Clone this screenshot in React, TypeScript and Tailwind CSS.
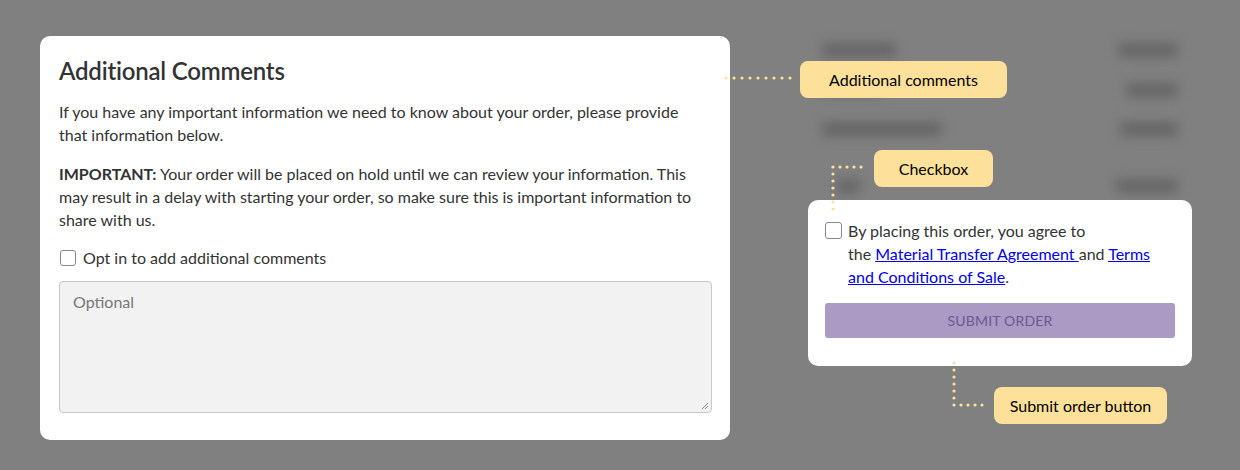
import React from "react";

const body = { fontFamily: "Lato, 'Noto Sans', sans-serif" };

function Dots({ points }: { points: [number, number][] }) {
  return (
    <>
      {points.map(([x, y], i) => (
        <circle key={i} cx={x} cy={y} r={1.6} fill="#fde19a" />
      ))}
    </>
  );
}

function range(a: number, b: number, step: number) {
  const out: number[] = [];
  for (let v = a; v <= b + 0.01; v += step) out.push(v);
  return out;
}

export default function App() {
  const dots: [number, number][] = [
    ...range(726, 790, 8).map((x) => [x, 78] as [number, number]),
    ...range(833, 861, 7).map((x) => [x, 167] as [number, number]),
    ...range(174, 209, 7).map((y) => [833, y] as [number, number]),
    ...range(363, 405, 7).map((y) => [954, y] as [number, number]),
    ...range(961, 982, 7).map((x) => [x, 405] as [number, number]),
  ];

  const bar = "h-[14px] rounded-[4px] bg-[#656565]";

  return (
    <div
      className="relative w-[1240px] h-[470px] bg-[#808080] overflow-hidden flex pt-[36px] pl-[40px]"
      style={body}
    >
      {/* Left card */}
      <div className="w-[690px] h-[404px] bg-white rounded-[10px] pt-[20px] pl-[19px] pr-[18px] text-[#333]">
        <h2 className="text-[24px] leading-[30px] font-semibold text-[#333] tracking-[-0.2px]">
          Additional Comments
        </h2>
        <p className="mt-[14px] w-[645px] text-[16px] leading-[23px]">
          If you have any important information we need to know about your order, please provide
          that information below.
        </p>
        <p className="mt-[16px] w-[645px] text-[16px] leading-[23px]">
          <span className="font-bold">IMPORTANT:</span> Your order will be placed on hold until we
          can review your information. This may result in a delay with starting your order, so make
          sure this is important information to share with us.
        </p>
        <label className="mt-[15px] flex items-center gap-[7px] text-[16px] leading-[23px]">
          <span className="ml-[1px] w-[16px] h-[16px] border-[1.5px] border-[#888] rounded-[3px] bg-white" />
          Opt in to add additional comments
        </label>
        <div className="relative mt-[12px] w-[653px] h-[132px] bg-[#f2f2f2] border border-[#c8c8c8] rounded-[4px] pl-[13px] pt-[8px] text-[16px] text-[#777]">
          Optional
          <svg className="absolute right-[2px] bottom-[2px]" width="8" height="8" viewBox="0 0 8 8">
            <path d="M7 1L1 7M7 4L4 7" stroke="#888" strokeWidth="1" />
          </svg>
        </div>
      </div>

      {/* Right column */}
      <div className="ml-[78px] w-[384px] flex flex-col">
        <div className="h-[164px] flex flex-col px-[14px] blur-[6px]">
          <div className="flex justify-between h-[28px] items-center">
            <div className={`w-[74px] ${bar}`} />
            <div className={`w-[60px] ${bar}`} />
          </div>
          <div className="flex justify-between h-[28px] items-center mt-[12px]">
            <div className="w-[60px] h-[14px] rounded-[4px] bg-[#707070]" />
            <div className={`w-[52px] ${bar}`} />
          </div>
          <div className="flex justify-between h-[28px] items-center mt-[12px]">
            <div className={`w-[120px] ${bar}`} />
            <div className={`w-[58px] ${bar}`} />
          </div>
          <div className="flex justify-between h-[28px] items-center mt-[29px]">
            <div className={`ml-[14px] w-[24px] ${bar}`} />
            <div className={`w-[62px] ${bar}`} />
          </div>
        </div>
        <div className="relative bg-white rounded-[10px] h-[166px] pt-[22px] px-[17px] text-[#333]">
          <div className="flex gap-[6px] text-[16px] leading-[23px]">
            <span className="shrink-0 w-[17px] h-[17px] border-[1.5px] border-[#888] rounded-[3px] bg-white" />
            <div className="-mt-[3px]">
              By placing this order, you agree to
              <br />
              the{" "}
              <a className="text-[#0000ee] underline">Material Transfer Agreement </a>
              and{" "}
              <a className="text-[#0000ee] underline">
                Terms
                <br />
                and Conditions of Sale
              </a>
              .
            </div>
          </div>
          <div className="mt-[15px] h-[35px] rounded-[3px] bg-[#ab9ac4] flex items-center justify-center text-[14px] tracking-[0.2px] text-[#6a5993] uppercase">
            Submit Order
          </div>
        </div>
      </div>

      {/* Annotation overlays */}
      <svg className="absolute left-0 top-0 pointer-events-none" width="1240" height="470">
        <Dots points={dots} />
      </svg>
      <div className="absolute left-[800px] top-[61px] w-[207px] h-[37px] rounded-[8px] bg-[#fde19a] flex items-center justify-center text-[16px] text-black">
        Additional comments
      </div>
      <div className="absolute left-[874px] top-[150px] w-[119px] h-[37px] rounded-[8px] bg-[#fde19a] flex items-center justify-center text-[16px] text-black">
        Checkbox
      </div>
      <div className="absolute left-[994px] top-[387px] w-[173px] h-[37px] rounded-[8px] bg-[#fde19a] flex items-center justify-center text-[16px] text-black">
        Submit order button
      </div>
    </div>
  );
}
